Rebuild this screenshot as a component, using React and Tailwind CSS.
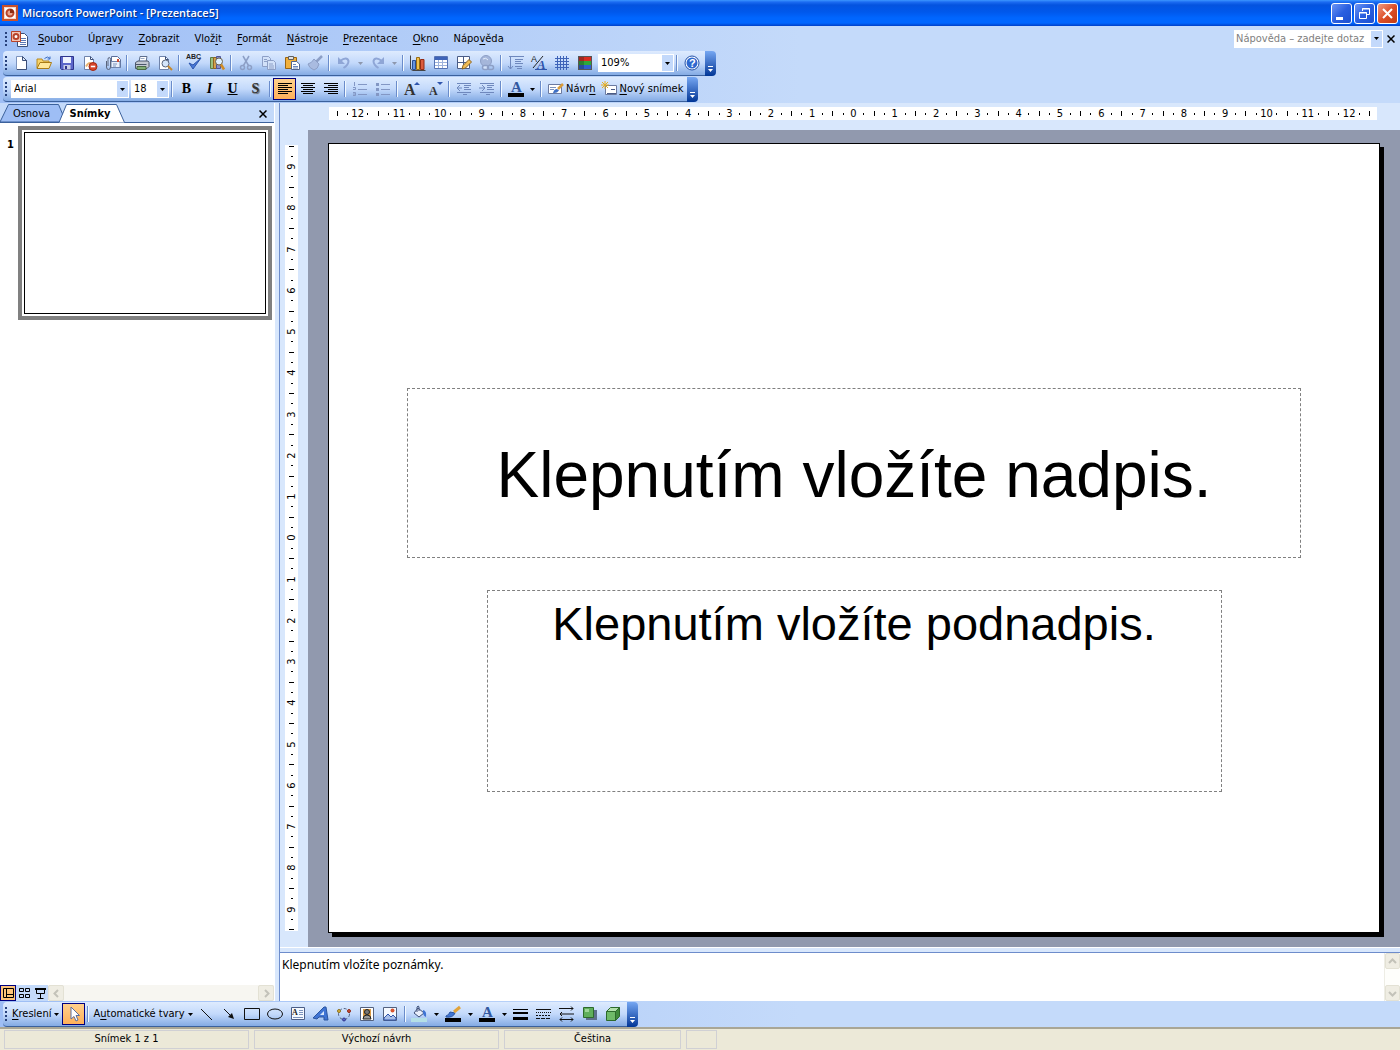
import React, { useState } from "react";

// 16x16 drawing surface shared by all the toolbar icons
const Svg = ({ children }) => (
  <svg width="16" height="16" viewBox="0 0 16 16" fill="none" className="shrink-0 overflow-visible" aria-hidden="true">
    {children}
  </svg>
);

const icons = {
  blank: (
    <>
      <path d="M3.5 1.5h6l4 4v9h-10z" fill="#fff" stroke="#7c93bd" />
      <path d="M13.5 5v9.5H4" stroke="#3c4f78" />
      <path d="M9.5 1.5v4h4z" fill="#dbe6f8" stroke="#3c4f78" />
    </>
  ),
  open: (
    <>
      <path d="M1 13V4h5l1 2h6v7z" fill="#f7d36b" stroke="#b88a1e" />
      <path d="m1 13.5 3-6h11.5l-2.5 6z" fill="#ffe79a" stroke="#a97b17" />
      <path d="M8.500 3.500q3-3 5.500 0m0-2v2.500h-2.500" stroke="#3d6fc4" />
    </>
  ),
  save: (
    <>
      <path d="M1.5 1.5h13v13h-12l-1-1z" fill="#5b66c9" stroke="#2e348c" />
      <path d="M4 2h8v6H4z" fill="#eef2ff" />
      <path d="M4.5 10h7v4.5h-7z" fill="#c9cfe8" />
      <path d="M6 11h2v3H6z" fill="#2e348c" />
    </>
  ),
  permission: (
    <>
      <path d="M2.5 1.5h6l3 3v10h-9z" fill="#fff" stroke="#6f83ab" />
      <path d="M8.5 1.5v3h3" stroke="#3c4f78" />
      <path d="M4 11.5q3-5 5-3" stroke="#e7b26e" strokeWidth="2" />
      <circle cx="11" cy="11.5" r="4" fill="#d8442a" stroke="#a22813" />
      <path d="M8.8 10.700h4.400v1.600H8.800z" fill="#fff" />
    </>
  ),
  mail: (
    <>
      <path d="M6.5 1.5h6l3 3v8h-9z" fill="#fff" stroke="#5b6f9a" />
      <path d="M6 6.5h9v6H6z" fill="#e9f0fb" stroke="#6f83ab" />
      <path d="M12 4h2v3h-2z" fill="#d04a32" />
      <path d="M8 9h4m-4 2h3" stroke="#7c93bd" />
      <path d="M1.500 6v6q0 2.500 2 2.500t2-2.500V4.500q0-2-1.300-2T3 4.500V11" stroke="#59647c" />
    </>
  ),
  print: (
    <>
      <path d="m5 7 1-5.500h7L12 7z" fill="#fff" stroke="#5e6f8e" />
      <path d="M1.5 7.5 4 6h10l1 1.500v4l-2 2h-11.500z" fill="#c3c9d3" stroke="#4b566b" />
      <path d="M2 9.5h10.500" stroke="#4b566b" />
      <path d="M3 11.5h9v3H3z" fill="#7fae76" stroke="#4c6a47" />
      <path d="M6.5 3.5h4m-4.500 2h4" stroke="#9aa9c4" />
    </>
  ),
  preview: (
    <>
      <path d="M2.5 1.5h6l3 3v10h-9z" fill="#fff" stroke="#6f83ab" />
      <path d="M8.5 1.5v3h3" stroke="#3c4f78" />
      <circle cx="8.5" cy="8.5" r="3.5" fill="#d5e6fa" stroke="#59647c" />
      <path d="m11 11 4 4" stroke="#c98a2b" strokeWidth="2" />
    </>
  ),
  spell: (
    <>
      <text x="0" y="4" fontSize="7" fontWeight="bold" fontFamily="Liberation Sans, sans-serif" fill="#222">ABC</text>
      <path d="m3 8 4 6 8-11-8 7z" fill="#4a7ad8" stroke="#2d55ad" />
    </>
  ),
  research: (
    <>
      <path d="M1.5 2.5h3v11h-3z" fill="#9cc07e" stroke="#5c7d42" />
      <path d="M4.5 2.5h3v11h-3z" fill="#d6a04b" stroke="#8f6420" />
      <path d="M7.5 1.5h4v12h-4z" fill="#8d91c9" stroke="#4f5496" />
      <circle cx="10" cy="6.5" r="3.5" fill="#dff0ff" stroke="#6b6248" />
      <path d="m12 9.5 3 5" stroke="#d08c25" strokeWidth="2.5" />
    </>
  ),
  cut: (
    <g stroke="#8d9fc6">
      <path d="m5 1 5.500 9.500M11 1 5.500 10.500" strokeWidth="1.5" />
      <circle cx="4.5" cy="12.5" r="2" strokeWidth="1.5" />
      <circle cx="11.5" cy="12.5" r="2" strokeWidth="1.5" />
    </g>
  ),
  copy: (
    <g stroke="#8d9fc6" fill="#d2e1f9">
      <path d="M1.5 1.5h6l2 2v8h-8z" />
      <path d="M6.5 5.5h6l2 2v7h-8z" />
      <path d="M3 4.5h3m-3 2h3m2 2.500h4m-4 2h5m-5 2h5" />
    </g>
  ),
  paste: (
    <>
      <path d="M1.5 2.5h11v11h-11z" fill="#f1b03c" stroke="#9a6412" />
      <path d="M4.5 1.5h5v3h-5z" fill="#e3e3e3" stroke="#5f5f5f" />
      <path d="M7.5 6.5h5l3 2.500v5.500h-8z" fill="#fff" stroke="#51648f" />
      <path d="M9 9.5h3m-3 2h5m-5 1.500h5" stroke="#6d87bd" />
    </>
  ),
  brush: (
    <g stroke="#8d9fc6">
      <path d="m15 1-6 6" strokeWidth="2.5" />
      <path d="m7 4 5 5q-1 5-5 6-5-2-6-6 4-1 6-5z" fill="#a9bbe0" />
    </g>
  ),
  undo: (
    <>
      <path d="M4 6q7-5 8.500 0 0 4-5 7" stroke="#8fa6d6" strokeWidth="2" />
      <path d="M2 2v7h7z" fill="#8fa6d6" />
    </>
  ),
  redo: (
    <>
      <path d="M12 6q-7-5-8.500 0 0 4 5 7" stroke="#8fa6d6" strokeWidth="2" />
      <path d="M14 2v7H7z" fill="#8fa6d6" />
    </>
  ),
  chart: (
    <>
      <path d="M.5.5V14l2 1.500h13" stroke="#444" />
      <path d="M2.5 5.5h3v9h-3z" fill="#6793dc" stroke="#274f97" />
      <path d="M6.5 2.5h3v12h-3z" fill="#f3c24e" stroke="#9a6d12" />
      <path d="M10.5 4.5H14v10h-3.500z" fill="#da5b3f" stroke="#932b14" />
    </>
  ),
  table: (
    <>
      <path d="M1.5 1.5h13v12h-13z" fill="#fff" stroke="#5673b3" />
      <path d="M2 2h12v3H2z" fill="#3e63b8" />
      <path d="M2 7.5h12m-12 3h12M5.5 5v8m4-8v8" stroke="#9db2dc" />
    </>
  ),
  borders: (
    <>
      <path d="M1.5 1.5h12v12h-12zm0 6h12m-6-6v12" fill="#fff" stroke="#4b5d86" />
      <path d="m6 14 1-3.500 6-6 2.500 2.500-6 6z" fill="#f2bd55" stroke="#8c6420" />
    </>
  ),
  link: (
    <g stroke="#8d9fc6">
      <circle cx="7" cy="6" r="5.5" fill="#a5b6da" />
      <path d="M4 4q3-2 5 1" stroke="#e4edfb" />
      <rect x="3.5" y="10.5" width="6" height="4" rx="2" fill="#d2e1f9" strokeWidth="1.5" />
      <rect x="8.5" y="10.5" width="6" height="4" rx="2" strokeWidth="1.5" />
    </g>
  ),
  expand: (
    <path d="M2.5 2v12m-2.500-3 2.500 3L5 11M1 1.500h15M7 4.500h8M7 6.500h6M7 8.500h8M7 11.500h7m-5 2h5" stroke="#6f88bd" />
  ),
  formatting: (
    <>
      <text x="0" y="7" fontSize="9" fontFamily="Liberation Sans, sans-serif" fill="#222">A</text>
      <path d="M2 13 12 1" stroke="#222" />
      <text x="6" y="14" fontSize="13" fontStyle="italic" fontWeight="bold" fontFamily="Liberation Serif, serif" fill="#2f55ad">A</text>
      <path d="M4 14.5h12" stroke="#2f55ad" />
    </>
  ),
  grid: <path d="M1 3.5h14m-14 3h14m-14 3h14m-14 3h14M3.500 1v14m3-14v14m3-14v14m3-14v14" stroke="#3e63b8" />,
  color: (
    <>
      <path d="M1 1h14v14H1z" fill="#555" />
      <path d="M2 2h12v4H2z" fill="#d92b20" />
      <path d="M2 6h12v4H2z" fill="#2fa83a" />
      <path d="M2 10h12v4H2z" fill="#2f5fd0" />
      <path d="M2 2h5v12H2z" fill="#222" opacity=".3" />
    </>
  ),
  help: (
    <>
      <circle cx="8" cy="8" r="7" fill="#fff" stroke="#2250a8" />
      <circle cx="8" cy="8" r="5.500" fill="#2f68cf" />
      <text x="5" y="12" fontSize="11" fontWeight="bold" fontFamily="Liberation Sans, sans-serif" fill="#fff">?</text>
    </>
  ),
  left: <path d="M1 2.5h14m-14 2h10m-10 2h14m-14 2h10m-10 2h14m-14 2h10" stroke="#000" />,
  center: <path d="M1 2.5h14m-12 2h10m-12 2h14m-12 2h10m-12 2h14m-12 2h10" stroke="#000" />,
  right: <path d="M1 2.5h14m-10 2h10m-14 2h14m-10 2h10m-14 2h14m-10 2h10" stroke="#000" />,
  numbered: (
    <path d="M6 3.5h9m-9 5h9m-9 5h9M2.500 1v4M1 6.500h2.500v2H1M1 11.500h2.500v3H1M1 13h2" stroke="#8397c4" />
  ),
  bullets: (
    <>
      <path d="M6 3.5h9m-9 5h9m-9 5h9" stroke="#8397c4" />
      <path d="M1 2h3v3H1zm0 5h3v3H1zm0 5h3v3H1z" fill="#8397c4" />
    </>
  ),
  grow: (
    <>
      <text x="0" y="14" fontSize="16" fontWeight="bold" fontFamily="Liberation Serif, serif" fill="#333">A</text>
      <path d="m10 4 3-3 3 3z" fill="#2f55ad" />
    </>
  ),
  shrink: (
    <>
      <text x="2" y="14" fontSize="12" fontWeight="bold" fontFamily="Liberation Serif, serif" fill="#333">A</text>
      <path d="m10 1 3 3 3-3z" fill="#2f55ad" />
    </>
  ),
  outdent: (
    <path d="M1 2.5h14m-7 2h7m-7 2h5m-5 2h7m-14 3h14m-8 2h4M6 7H1m3-3L1 7l3 3" stroke="#6f88bd" />
  ),
  indent: (
    <path d="M1 2.5h14m-7 2h7m-7 2h5m-5 2h7m-14 3h14m-8 2h4M0 7h5M3 4l3 3-3 3" stroke="#6f88bd" />
  ),
  fontColor: (
    <>
      <text x="3" y="11" fontSize="15" fontWeight="bold" fontFamily="Liberation Serif, serif" fill="#31589f">A</text>
      <path d="M0 12h16v4H0z" fill="#000" />
    </>
  ),
  design: (
    <>
      <path d="M.5 3.5h13v9H.5z" fill="#fff" stroke="#6b7aa0" />
      <path d="M2 6.5h6m-6 2h4" stroke="#7c93bd" />
      <path d="M5 12q1-4 4-4l2 1.500q-2 3-6 2.500z" fill="#3d6fc4" />
      <path d="m10 8 5-5" stroke="#d99c3a" strokeWidth="2.5" />
    </>
  ),
  newSlide: (
    <>
      <path d="M4.5 4.5h11v9h-11z" fill="#fff" stroke="#6b7aa0" />
      <path d="M10 8.5h4m-8 4h9" stroke="#4a5b85" />
      <path d="M4 0v8M0 4h8M1 1l6 6m0-6L1 7" stroke="#e6ae20" />
    </>
  ),
  pointer: <path d="M5 1v12l3-2.500 2 4.500 2-1-2-4.500h3.500z" fill="#fff" stroke="#5c6f9c" />,
  line: <path d="m3 3 11 11" stroke="#111" />,
  arrow: (
    <>
      <path d="m3 3 8 8" stroke="#111" />
      <path d="m13 13-6-2 4-4z" fill="#111" />
    </>
  ),
  rect: <path d="M.5 2.5h15v11H.5z" stroke="#111" />,
  oval: <ellipse cx="8" cy="8" rx="7.5" ry="5" stroke="#111" />,
  textbox: (
    <>
      <path d="M1.5 1.5h13v12h-13z" fill="#f5f9ff" stroke="#4b5d86" />
      <text x="2" y="9" fontSize="8" fontWeight="bold" fontFamily="Liberation Serif, serif" fill="#222">A</text>
      <path d="M9 4.5h4m-4 2h4m-4 2h4m-10 3h10" stroke="#7c93bd" />
    </>
  ),
  wordart: (
    <>
      <path d="m0 12 11-11h2l2 13h-4v-3H6l-2 2z" fill="#3f74d4" stroke="#2b559f" />
      <path d="m7 9 4-4v4z" fill="#d8e7fc" />
    </>
  ),
  diagram: (
    <>
      <circle cx="8" cy="8" r="5.5" stroke="#53617f" strokeDasharray="3 2" />
      <circle cx="3" cy="5" r="1.5" fill="#e0b83f" stroke="#8b7020" />
      <circle cx="13" cy="5" r="1.5" fill="#d0503b" stroke="#8e2b19" />
      <circle cx="8" cy="13.5" r="1.5" fill="#5660d0" stroke="#30378c" />
    </>
  ),
  clipart: (
    <>
      <path d="M1.5 1.5h13v13h-13z" fill="#fff" stroke="#53617f" />
      <path d="M4 3h8v10H4z" fill="#d99a45" />
      <circle cx="8" cy="6" r="2.5" fill="#777" stroke="#222" />
      <path d="M4 13q0-4 4-4t4 4z" fill="#999" stroke="#222" />
    </>
  ),
  picture: (
    <>
      <path d="M1.5 1.5h13v13h-13z" fill="#f5f9ff" stroke="#53617f" />
      <path d="m2 12 4-4 3 3 2-2 3 3v2H2z" fill="#a9bfe9" stroke="#2f55ad" />
      <circle cx="10.500" cy="4.500" r="2" fill="#d8542f" />
    </>
  ),
  fill: (
    <>
      <path d="m3 7 4-5 6 5-5 4z" fill="#e8eefb" stroke="#3c4f78" />
      <path d="M6 6V1q1.500-2 2 0v4" stroke="#3c4f78" />
      <path d="M12 4q4 1 3 7-3-1-3-5z" fill="#3f74d4" />
      <path d="M0 12h16v4H0z" fill="#b5e0e6" />
    </>
  ),
  lineColor: (
    <>
      <path d="M1 10q3-1 4-4l5 1q-2 5-9 4z" fill="#3f74d4" stroke="#2b559f" />
      <path d="m9 6 6-5" stroke="#e1a339" strokeWidth="3" />
      <path d="M0 12h16v4H0z" fill="#000" />
    </>
  ),
  lineStyle: (
    <>
      <path d="M0 3.5h15" stroke="#000" />
      <path d="M0 6h15v2H0zm0 5h15v3H0z" fill="#000" />
    </>
  ),
  dashStyle: (
    <g stroke="#111">
      <path d="M0 3.5h15" />
      <path d="M0 6.5h15" strokeDasharray="1 1" />
      <path d="M0 9.5h15" strokeDasharray="2 1" />
      <path d="M0 12.5h15" strokeDasharray="4 1" />
    </g>
  ),
  arrowStyle: <path d="M0 2.5h14M12 .5l2 2-2 2M15 8H1m2-2L1 8l2 2m-2 3.500h13m-11-2-2 2 2 2m9-4 2 2-2 2" stroke="#111" />,
  shadow: (
    <>
      <path d="M4 4h11v10H4z" fill="#5d6f8c" />
      <path d="M1.500 1.500h10v10h-10z" fill="#5fae5b" stroke="#2d6a2c" />
      <path d="M3 3h4v3H3z" fill="#9dd596" />
    </>
  ),
  cube: (
    <>
      <path d="M1.500 5.500h9v9h-9z" fill="#6fba69" stroke="#2d6a2c" />
      <path d="m1.500 5.500 4-4h9l-4 4z" fill="#b1e0ab" stroke="#2d6a2c" />
      <path d="m10.500 5.500 4-4v9l-4 4z" fill="#3f8a3c" stroke="#2d6a2c" />
    </>
  ),
};

const Caret = ({ dim }) => (
  <svg width="5" height="3" viewBox="0 0 5 3" className="shrink-0" aria-hidden="true">
    <path d="M0 0h5L2.500 3z" fill={dim ? "#8d97ad" : "#000"} />
  </svg>
);

// "&" goes before the underlined letter, as in a Windows resource file
const Mnemonic = ({ text }) => {
  const at = text.indexOf("&");
  return (
    <span className="whitespace-nowrap">
      {text.slice(0, at)}
      <span className="underline underline-offset-2">{text[at + 1]}</span>
      {text.slice(at + 2)}
    </span>
  );
};

const Tool = ({ icon, label, active, onClick, children }) => (
  <button
    type="button"
    aria-label={label}
    title={label}
    onClick={onClick}
    className={`flex h-[22px] w-[23px] shrink-0 items-center justify-center ${
      active ? "border border-[#000080] bg-gradient-to-b from-[#ffd08c] to-[#ffb059]" : ""
    }`}
  >
    {icon ? <Svg>{icons[icon]}</Svg> : children}
  </button>
);

const Drop = ({ label, dim }) => (
  <button type="button" aria-label={label} className="flex h-[22px] w-[11px] shrink-0 items-center justify-center">
    <Caret dim={dim} />
  </button>
);

const Sep = () => (
  <div className="flex h-4 w-[6px] shrink-0 justify-center">
    <div className="w-px bg-[#6a8ccb]" />
    <div className="w-px bg-[#f1f9ff]" />
  </div>
);

const Grip = () => (
  <div className="flex w-[6px] shrink-0 flex-col items-center gap-[2px]">
    {[0, 1, 2, 3].map((i) => (
      <span key={i} className="h-[2px] w-[2px] bg-[#27417c]" />
    ))}
  </div>
);

const Toolbar = ({ label, children }) => (
  <div role="toolbar" aria-label={label} className="ml-[3px] flex h-[25px] w-fit">
    <div className="flex items-center rounded-l-sm border-b border-[#3b619c] bg-gradient-to-b from-[#deebfe] via-[#c3d9fb] to-[#84abe4] pr-[2px]">
      <Grip />
      {children}
    </div>
    <button
      type="button"
      aria-label="Možnosti panelu nástrojů"
      className="flex w-[11px] flex-col items-center justify-end gap-[2px] rounded-r-sm bg-gradient-to-b from-[#76a7f2] to-[#003596] pb-1"
    >
      <span className="h-px w-[5px] bg-white" />
      <svg width="5" height="3" viewBox="0 0 5 3" aria-hidden="true">
        <path d="M0 0h5L2.500 3z" fill="#fff" />
      </svg>
    </button>
  </div>
);

const Combo = ({ label, value, className }) => (
  <label className={`relative ml-[2px] flex h-[18px] shrink-0 bg-white ${className}`}>
    <select aria-label={label} defaultValue={value} className="w-full appearance-none pl-[3px] outline-none">
      <option>{value}</option>
    </select>
    <span className="pointer-events-none absolute inset-y-px right-px flex w-[11px] items-center justify-center bg-[#c3d9fb]">
      <Caret />
    </span>
  </label>
);

const TitleBar = () => (
  <header className="flex h-[26px] shrink-0 items-center bg-[linear-gradient(to_bottom,#3c96ff_0px,#1c6cf2_2px,#0453df_5px,#0058ec_12px,#0066ff_18px,#0066ff_23px,#0040c8_26px)] pr-[2px] pl-[2px]">
    <svg width="16" height="16" viewBox="0 0 16 16" fill="none" aria-hidden="true">
      <path d="M1 1h14v14H1z" fill="#f6d9cd" stroke="#c8502c" strokeWidth="2" />
      <path d="M3 3h10v10H3z" fill="#fff" />
      <circle cx="8" cy="8" r="3.500" fill="#e9a58d" stroke="#b8432a" strokeWidth="2" />
      <path d="M8 8V4q4 0 4 4z" fill="#8e2c12" />
    </svg>
    <h1 className="ml-1 flex-1 font-['Open_Sans','Noto_Sans',sans-serif] text-[11px] font-semibold text-white [text-shadow:1px_1px_1px_#0a2a7a]">
      Microsoft PowerPoint - [Prezentace5]
    </h1>
    <div className="flex gap-[2px]">
      <button type="button" aria-label="Minimalizovat" className="h-[21px] w-[21px] rounded-[3px] border border-white bg-gradient-to-br from-[#6c94f5] via-[#2a5fe0] to-[#1c4fd0]">
        <svg viewBox="0 0 19 19" aria-hidden="true">
          <path d="M4 13h7v3H4z" fill="#fff" />
        </svg>
      </button>
      <button type="button" aria-label="Obnovit" className="h-[21px] w-[21px] rounded-[3px] border border-white bg-gradient-to-br from-[#6c94f5] via-[#2a5fe0] to-[#1c4fd0]">
        <svg viewBox="0 0 19 19" fill="none" stroke="#fff" aria-hidden="true">
          <path d="M7.500 7V4.500h7v6H12M7 5h8M4.500 8.500h7v6h-7zM4 9h8" />
        </svg>
      </button>
      <button type="button" aria-label="Zavřít" className="h-[21px] w-[21px] rounded-[3px] border border-white bg-gradient-to-br from-[#ee9a80] via-[#dd4f27] to-[#c13a12]">
        <svg viewBox="0 0 19 19" stroke="#fff" strokeWidth="2" aria-hidden="true">
          <path d="m5 5 9 9m0-9-9 9" />
        </svg>
      </button>
    </div>
  </header>
);

const menus = ["&Soubor", "Úpr&avy", "&Zobrazit", "Vlož&it", "&Formát", "&Nástroje", "&Prezentace", "&Okno", "Nápo&věda"];

const CloseX = ({ label }) => (
  <button type="button" aria-label={label} className="flex h-4 w-4 items-center justify-center">
    <svg width="8" height="8" viewBox="0 0 8 8" stroke="#000" strokeWidth="1.5" aria-hidden="true">
      <path d="m.5.5 7 7m0-7-7 7" />
    </svg>
  </button>
);

const MenuBar = () => (
  <nav className="flex h-[25px] items-center pl-[3px]">
    <Grip />
    <svg width="20" height="18" viewBox="0 0 20 18" className="mr-px ml-px" fill="none" aria-hidden="true">
      <path d="M7.500 3.500h7l3 3v10h-10z" fill="#fff" stroke="#3c4f78" />
      <path d="M11 8.500h5m-6 2h6m-6 2h6m-6 2h6" stroke="#5b78b5" />
      <path d="M1.500 1.500h9v10h-9z" fill="#f3c4b4" stroke="#b8432a" />
      <circle cx="6" cy="6.500" r="2.500" fill="#fff" stroke="#b8432a" strokeWidth="2" />
    </svg>
    <div className="flex gap-px">
      {menus.map((m) => (
        <button key={m} type="button" className="px-[7px]">
          <Mnemonic text={m} />
        </button>
      ))}
    </div>
    <div className="mr-px ml-auto flex items-center">
      <div className="flex h-[18px] w-[149px] bg-white">
        <input
          aria-label="Nápověda"
          placeholder="Nápověda – zadejte dotaz"
          className="w-[137px] pl-[2px] outline-none placeholder:text-[#808080]"
        />
        <button type="button" aria-label="Dotazy" className="my-px flex w-[11px] items-center justify-center bg-[#c3d9fb]">
          <Caret />
        </button>
      </div>
      <CloseX label="Zavřít okno" />
    </div>
  </nav>
);

const StandardBar = () => (
  <Toolbar label="Standardní">
    <Tool icon="blank" label="Nový" />
    <Tool icon="open" label="Otevřít" />
    <Tool icon="save" label="Uložit" />
    <Tool icon="permission" label="Oprávnění" />
    <Tool icon="mail" label="E-mail" />
    <Sep />
    <Tool icon="print" label="Tisk" />
    <Tool icon="preview" label="Náhled" />
    <Sep />
    <Tool icon="spell" label="Pravopis" />
    <Tool icon="research" label="Zdroje informací" />
    <Sep />
    <Tool icon="cut" label="Vyjmout" />
    <Tool icon="copy" label="Kopírovat" />
    <Tool icon="paste" label="Vložit" />
    <Tool icon="brush" label="Kopírovat formát" />
    <Sep />
    <Tool icon="undo" label="Zpět" />
    <Drop label="Kroky zpět" dim />
    <Tool icon="redo" label="Znovu" />
    <Drop label="Kroky znovu" dim />
    <Sep />
    <Tool icon="chart" label="Graf" />
    <Tool icon="table" label="Tabulka" />
    <Tool icon="borders" label="Tabulky a ohraničení" />
    <Tool icon="link" label="Hypertextový odkaz" />
    <Sep />
    <Tool icon="expand" label="Rozbalit vše" />
    <Tool icon="formatting" label="Zobrazit formátování" />
    <Tool icon="grid" label="Mřížka" />
    <Tool icon="color" label="Barva" />
    <Combo label="Lupa" value="109%" className="w-[76px]" />
    <Sep />
    <Tool icon="help" label="Pomoc" />
  </Toolbar>
);

const aligns = [
  { icon: "left", label: "Zarovnat vlevo" },
  { icon: "center", label: "Na střed" },
  { icon: "right", label: "Zarovnat vpravo" },
];

const FormatBar = () => {
  const [align, setAlign] = useState("left");
  return (
    <Toolbar label="Formát">
      <Combo label="Písmo" value="Arial" className="w-[118px]" />
      <Combo label="Velikost písma" value="18" className="w-[38px]" />
      <Sep />
      <Tool label="Tučné">
        <b className="font-[Liberation_Serif] text-[14px]">B</b>
      </Tool>
      <Tool label="Kurzíva">
        <i className="font-[Liberation_Serif] text-[14px] font-bold">I</i>
      </Tool>
      <Tool label="Podtržené">
        <u className="font-[Liberation_Serif] text-[14px] font-bold">U</u>
      </Tool>
      <Tool label="Stín">
        <b className="font-[Liberation_Serif] text-[14px] text-[#333] [text-shadow:1px_1px_1px_#666]">S</b>
      </Tool>
      <Sep />
      {aligns.map((a) => (
        <Tool key={a.icon} icon={a.icon} label={a.label} active={align === a.icon} onClick={() => setAlign(a.icon)} />
      ))}
      <Sep />
      <Tool icon="numbered" label="Číslování" />
      <Tool icon="bullets" label="Odrážky" />
      <Sep />
      <Tool icon="grow" label="Zvětšit písmo" />
      <Tool icon="shrink" label="Zmenšit písmo" />
      <Sep />
      <Tool icon="outdent" label="Zmenšit odsazení" />
      <Tool icon="indent" label="Zvětšit odsazení" />
      <Sep />
      <Tool icon="fontColor" label="Barva písma" />
      <Drop label="Barvy písma" />
      <Sep />
      <button type="button" className="flex items-center gap-[2px] px-1">
        <Svg>{icons.design}</Svg>
        <Mnemonic text="Návr&h" />
      </button>
      <button type="button" className="flex items-center gap-[2px] px-[2px]">
        <Svg>{icons.newSlide}</Svg>
        <Mnemonic text="&Nový snímek" />
      </button>
    </Toolbar>
  );
};

const ScrollArrow = ({ d, label, className }) => (
  <button
    type="button"
    aria-label={label}
    className={`flex shrink-0 items-center justify-center rounded-[2px] border border-[#e3e1d4] bg-[#efede3] ${className}`}
  >
    <svg width="9" height="9" viewBox="0 0 9 9" fill="none" stroke="#c3c2b9" strokeWidth="2" aria-hidden="true">
      <path d={d} />
    </svg>
  </button>
);

const SlidesPane = () => (
  <aside className="flex w-[274px] shrink-0 flex-col bg-white">
    <div className="flex h-5 items-end border-b border-[#3b619c] bg-[#c4dafa]">
      <button type="button" className="relative h-[18px] w-[59px] pt-[2px] pl-1">
        <svg width="66" height="18" viewBox="0 0 66 18" className="absolute inset-0" aria-hidden="true">
          <path d="M0 18 8.500.500h50L66 18z" fill="#9ebef5" stroke="#3b619c" />
        </svg>
        <span className="relative">Osnova</span>
      </button>
      <button type="button" className="relative -mb-px h-[19px] w-[66px] pt-px pr-1 font-bold">
        <svg width="66" height="19" viewBox="0 0 66 19" className="absolute inset-0" aria-hidden="true">
          <path d="M0 18.500 7.500.500h50l8 18" fill="#fff" stroke="#3b619c" />
        </svg>
        <span className="relative">Snímky</span>
      </button>
      <div className="mr-[3px] ml-auto">
        <CloseX label="Zavřít podokno" />
      </div>
    </div>
    <div className="flex flex-1 items-start pt-[3px] pr-[2px]">
      <span className="w-[18px] pt-[11px] pl-[3px] text-center font-bold">1</span>
      <button type="button" aria-label="Snímek 1" className="aspect-[254/194] flex-1 border-4 border-[#808080] bg-white p-[2px]">
        <span className="block h-full w-full border border-black" />
      </button>
    </div>
    <div className="flex h-4 bg-[#c4dafa]">
      <button type="button" aria-label="Normální zobrazení" className="w-4 border border-[#000080] bg-[#ffc47a]">
        <svg viewBox="0 0 14 14" fill="none" stroke="#000" aria-hidden="true">
          <path d="M2.500 2.500h10v9h-10zm3 0v9m0-3h7" />
        </svg>
      </button>
      <button type="button" aria-label="Řazení snímků" className="w-4">
        <svg viewBox="0 0 16 16" fill="none" stroke="#000" aria-hidden="true">
          <path d="M3.500 3.500h4v3h-4zm6 0h4v3h-4zm-6 6h4v3h-4zm6 0h4v3h-4z" />
        </svg>
      </button>
      <button type="button" aria-label="Prezentace" className="w-4">
        <svg viewBox="0 0 16 16" fill="none" stroke="#000" aria-hidden="true">
          <path d="M3 3.500h11M3 4.500h11M4.500 5v3.500h8V5M8.500 9v4m-3 .500h6" />
        </svg>
      </button>
      <div className="flex flex-1 justify-between bg-[#f7f6f1]">
        <ScrollArrow label="Doleva" d="M6 1 2.500 4.500 6 8" className="w-4" />
        <ScrollArrow label="Doprava" d="m3 1 3.500 3.500L3 8" className="w-4" />
      </div>
    </div>
  </aside>
);

// four marks per centimetre: number, dot, dash, dot
const rulerMarks = (limit) => {
  const marks = [];
  for (let q = -limit * 4; q <= limit * 4; q++) marks.push(q);
  return marks;
};

const Mark = ({ q, vertical }) => {
  if (q % 4 === 0) {
    return <span className={`shrink-0 leading-none ${vertical ? "-rotate-90" : ""}`}>{Math.abs(q / 4)}</span>;
  }
  if (q % 2 === 0) return <span className={`shrink-0 bg-black ${vertical ? "h-px w-[5px]" : "h-[5px] w-px"}`} />;
  return <span className={`shrink-0 bg-black ${vertical ? "h-px w-[2px]" : "h-[2px] w-px"}`} />;
};

const Ruler = ({ limit, vertical }) => (
  <div
    className={`flex justify-between bg-white text-[11px] ${
      vertical ? "h-full w-[13px] flex-col py-px" : "h-[13px] w-full pr-[7px] pl-2"
    }`}
  >
    {rulerMarks(limit).map((q) => (
      <div key={q} className={`flex items-center justify-center ${vertical ? "h-0 w-full" : "h-full w-0"}`}>
        <Mark q={q} vertical={vertical} />
      </div>
    ))}
  </div>
);

const Slide = () => (
  <div className="grid flex-1 grid-rows-[244fr_170fr_32fr_202fr_140fr] border border-black bg-white font-[Liberation_Sans] shadow-[4px_4px_0_#000]">
    <div />
    <div className="mx-[7.4%] flex items-center justify-center border border-dashed border-[#808080] pt-1">
      <h2 className="text-[64px] leading-none">Klepnutím vložíte nadpis.</h2>
    </div>
    <div />
    <div className="mx-[15%] border border-dashed border-[#808080] pt-[6px] text-center">
      <p className="text-[47px] leading-[54px]">Klepnutím vložíte podnadpis.</p>
    </div>
    <div />
  </div>
);

const Editor = () => (
  <main className="flex min-w-0 flex-1 flex-col border-l border-[#6d8ccb] bg-[#d8e7fc]">
    <div className="pt-1 pr-[23px] pb-[10px] pl-[49px]">
      <Ruler limit={12.5} />
    </div>
    <div className="flex flex-1">
      <div className="w-7 pt-[15px] pb-4 pl-[5px]">
        <Ruler limit={9.5} vertical />
      </div>
      <div className="flex flex-1 bg-[#9199ae] pt-[13px] pr-5 pb-[14px] pl-5">
        <Slide />
      </div>
    </div>
    <div className="h-[5px] border-t border-white" />
    <div className="flex h-[49px] border-t border-[#6d8ccb] bg-white">
      <textarea
        aria-label="Poznámky"
        defaultValue="Klepnutím vložíte poznámky."
        className="flex-1 resize-none overflow-hidden pt-1 pl-[2px] font-['Noto_Sans',sans-serif] text-[12px] leading-4 outline-none"
      />
      <div className="flex w-4 flex-col justify-between border-l border-[#eeede5] bg-[#fefefb]">
        <ScrollArrow label="Nahoru" d="M1 6 4.500 2.500 8 6" className="h-4" />
        <ScrollArrow label="Dolů" d="m1 3 3.500 3.500L8 3" className="h-4" />
      </div>
    </div>
  </main>
);

const DrawingBar = () => (
  <Toolbar label="Kreslení">
    <button type="button" className="flex items-center gap-[3px] px-[3px]">
      <Mnemonic text="&Kreslení" />
      <Caret />
    </button>
    <Tool icon="pointer" label="Vybrat objekty" active />
    <Sep />
    <button type="button" className="flex items-center gap-[3px] px-[2px]">
      <Mnemonic text="A&utomatické tvary" />
      <Caret />
    </button>
    <Tool icon="line" label="Čára" />
    <Tool icon="arrow" label="Šipka" />
    <Tool icon="rect" label="Obdélník" />
    <Tool icon="oval" label="Ovál" />
    <Tool icon="textbox" label="Textové pole" />
    <Tool icon="wordart" label="WordArt" />
    <Tool icon="diagram" label="Diagram" />
    <Tool icon="clipart" label="Klipart" />
    <Tool icon="picture" label="Obrázek" />
    <Sep />
    <Tool icon="fill" label="Barva výplně" />
    <Drop label="Barvy výplně" />
    <Tool icon="lineColor" label="Barva čáry" />
    <Drop label="Barvy čáry" />
    <Tool icon="fontColor" label="Barva písma" />
    <Drop label="Barvy písma" />
    <Tool icon="lineStyle" label="Styl čáry" />
    <Tool icon="dashStyle" label="Přerušovaná čára" />
    <Tool icon="arrowStyle" label="Styl šipky" />
    <Tool icon="shadow" label="Stín" />
    <Tool icon="cube" label="Prostorový efekt" />
  </Toolbar>
);

const StatusBar = () => (
  <footer className="flex h-[23px] items-stretch gap-[5px] border-t-2 border-[#a9a696] bg-[#ece9d8] pt-px pb-px pl-1 text-center">
    <span className="w-[245px] border border-[#d0d0d4]">Snímek 1 z 1</span>
    <span className="w-[245px] border border-[#d0d0d4]">Výchozí návrh</span>
    <span className="w-[177px] border border-[#d0d0d4]">Čeština</span>
    <span className="w-[31px] border border-[#d0d0d4]" />
  </footer>
);

const App = () => (
  <div className="flex h-screen flex-col overflow-hidden bg-[#c4dafa] font-['DejaVu_Sans_Condensed','Noto_Sans',sans-serif] text-[11px] leading-4 text-black">
    <TitleBar />
    <div className="bg-[linear-gradient(to_right,#9ebef5,#c4dafa_800px)] pb-px">
      <MenuBar />
      <StandardBar />
      <div className="h-px" />
      <FormatBar />
    </div>
    <div className="flex min-h-0 flex-1">
      <SlidesPane />
      <div className="w-[5px] shrink-0 border-l border-white bg-[#d8e7fc]" />
      <Editor />
    </div>
    <div className="bg-[linear-gradient(to_right,#9ebef5,#c4dafa_800px)] pt-px">
      <DrawingBar />
    </div>
    <StatusBar />
  </div>
);

export default App;
